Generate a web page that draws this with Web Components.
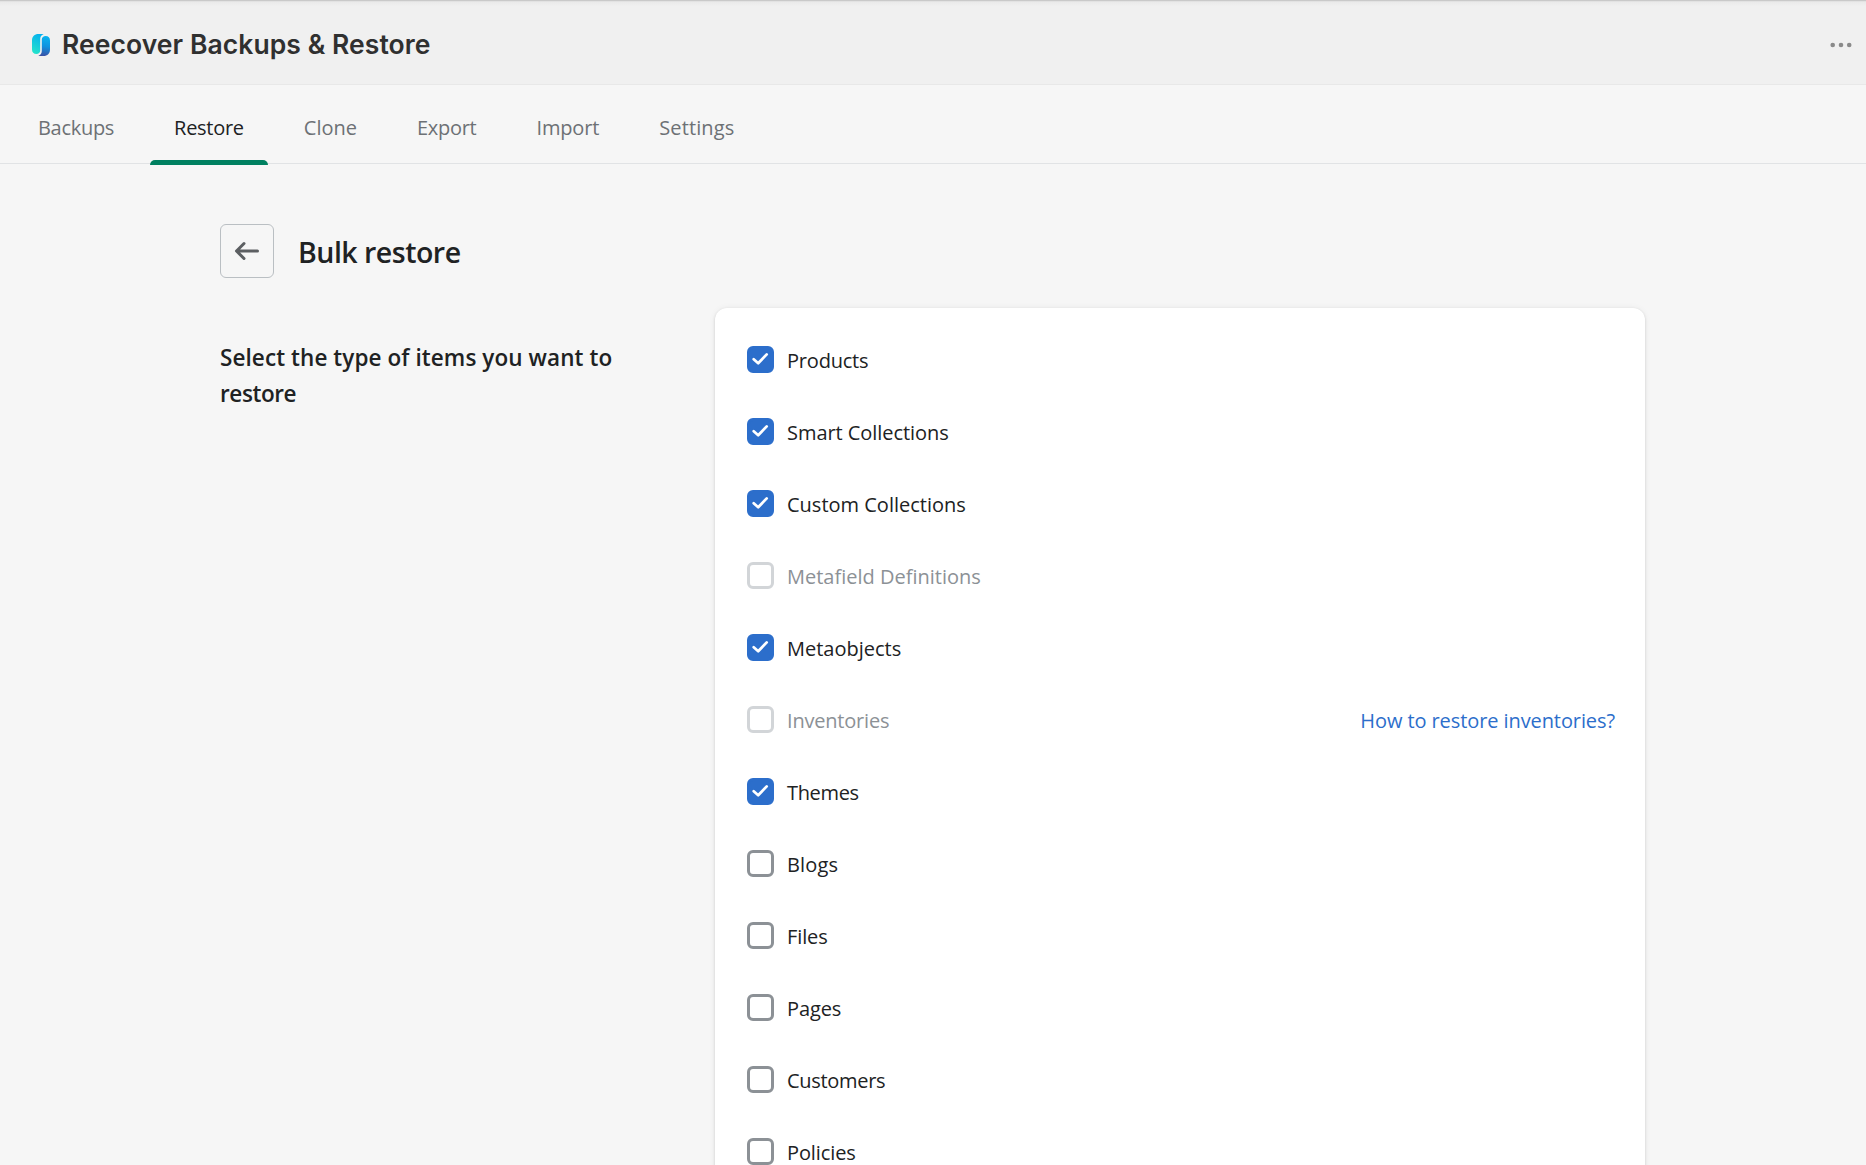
<!DOCTYPE html>
<html lang="en">
<head>
<meta charset="utf-8">
<title>Reecover Backups &amp; Restore</title>
<style>
    body {
        margin: 0;
        height: 1165px;
        overflow: hidden;
        background: #f6f6f6;
        color: #202223;
        font: 400 20px/28px "Open Sans", "Noto Sans", sans-serif;
    }
</style>
</head>
<body>
<restore-app></restore-app>

<script>
class AppHeader extends HTMLElement {
    constructor() {
        super();
        this.attachShadow({ mode: "open" });

        this.shadowRoot.innerHTML = `
            <style>
                :host {
                    display: flex;
                    align-items: center;
                    box-sizing: border-box;
                    height: 85px;
                    padding: 5px 14px 0 32px;
                    background: linear-gradient(#c9c9c9 0 1px, #e2e2e2 1px 2px, #eaeaea 2px, #f0f0f0 6px);
                    border-bottom: 1px solid #e8e8e8;
                }
                .logo {
                    flex: none;
                    margin-right: 12px;
                }
                .title {
                    flex: 1;
                    padding-bottom: 2px;
                    color: #303030;
                    font: 600 26.5px/36px Inter, sans-serif;
                    letter-spacing: 0.07px;
                }
            </style>
            <svg class="logo" width="18" height="22" viewBox="0 0 18 22">
                <defs>
                    <linearGradient id="left" x1="0.6" y1="0" x2="0.3" y2="1">
                        <stop offset="0" stop-color="#06b2ee"/>
                        <stop offset="1" stop-color="#25e3cb"/>
                    </linearGradient>
                    <linearGradient id="right" x1="0.5" y1="0" x2="0.4" y2="1">
                        <stop offset="0" stop-color="#08b4f0"/>
                        <stop offset="0.5" stop-color="#0c93e0"/>
                        <stop offset="1" stop-color="#3b50a4"/>
                    </linearGradient>
                </defs>
                <path fill="url(#left)" d="M6.5 0h5.2C9.3 1 8.2 2.800 8.200 5v11.500C8.200 18.800 6.600 20 4.600 20 1.700 20 0 18.300 0 15.500V6.500C0 2.500 2.500 0 6.500 0z"/>
                <path fill="url(#right)" d="M13.600 2C16.400 2 18 3.700 18 6.500v9c0 4-2.500 6.500-6.500 6.500H6.300c2.400-1 3.500-2.800 3.500-5V5.500C9.800 3.200 11.600 2 13.600 2z"/>
            </svg>
            <div class="title"><slot></slot></div>
            <svg width="22" height="6" viewBox="0 0 22 6" fill="#8a8a8a">
                <circle cx="2.700" cy="3" r="2.300"/>
                <circle cx="11" cy="3" r="2.300"/>
                <circle cx="19.200" cy="3" r="2.300"/>
            </svg>
        `;
    }
}

class NavTab extends HTMLElement {
    constructor() {
        super();
        this.attachShadow({ mode: "open" });

        this.shadowRoot.innerHTML = `
            <style>
                :host {
                    display: flex;
                    flex-direction: column;
                    justify-content: space-between;
                    color: #6d7175;
                }
                .label {
                    padding: 29px 24px 0;
                    white-space: nowrap;
                }
                .bar {
                    height: 5px;
                    border-radius: 5px 5px 0 0;
                }
                :host([selected]) {
                    color: #202223;
                }
                :host([selected]) .bar {
                    background: #008060;
                }
            </style>
            <div class="label"><slot></slot></div>
            <div class="bar"></div>
        `;
    }

    connectedCallback() {
        this.style.letterSpacing = (this.getAttribute("tracking") || 0) + "px";
    }
}

class NavTabs extends HTMLElement {
    constructor() {
        super();
        this.attachShadow({ mode: "open" });

        this.shadowRoot.innerHTML = `
            <style>
                :host {
                    display: flex;
                    gap: 12px;
                    height: 80px;
                    padding-left: 14px;
                    background: linear-gradient(#e1e3e5, #e1e3e5) 0 78px / 100% 1px no-repeat;
                }
            </style>
            <slot></slot>
        `;
    }
}

class BackButton extends HTMLElement {
    constructor() {
        super();
        this.attachShadow({ mode: "open" });

        this.shadowRoot.innerHTML = `
            <style>
                :host {
                    display: grid;
                    place-items: center;
                    box-sizing: border-box;
                    width: 54px;
                    height: 54px;
                    border: 1px solid #babfc3;
                    border-radius: 6px;
                }
            </style>
            <svg width="30" height="30" viewBox="0 0 20 20" fill="#5c5f62">
                <path d="M17 9H5.414l3.293-3.293a.999.999 0 1 0-1.414-1.414l-5 5a.999.999 0 0 0 0 1.414l5 5a.997.997 0 0 0 1.414 0 .999.999 0 0 0 0-1.414L5.414 11H17a1 1 0 1 0 0-2z"/>
            </svg>
        `;
    }
}

class CheckItem extends HTMLElement {
    constructor() {
        super();
        this.attachShadow({ mode: "open" });

        this.shadowRoot.innerHTML = `
            <style>
                :host {
                    display: flex;
                    box-sizing: border-box;
                    height: 72px;
                    padding-top: 22px;
                    line-height: 30px;
                }
                .box {
                    display: grid;
                    place-items: center;
                    flex: none;
                    box-sizing: border-box;
                    width: 27px;
                    height: 27px;
                    margin-right: 13px;
                    border: 3px solid #8c9196;
                    border-radius: 6px;
                }
                .box svg {
                    display: none;
                }
                .label {
                    flex: 1;
                    white-space: nowrap;
                }
                :host([checked]) .box {
                    border-color: #2c6ecb;
                    background: #2c6ecb;
                }
                :host([checked]) svg {
                    display: block;
                }
                :host([disabled]) .box {
                    border-color: #d2d5d8;
                }
                :host([disabled]) .label {
                    color: #8c9196;
                }
            </style>
            <div class="box">
                <svg width="21" height="21" viewBox="0 0 21 21" fill="none" stroke="#fff" stroke-width="2.700" stroke-linecap="round" stroke-linejoin="round">
                    <path d="M3.700 10.200l4.500 4.100 8.500-8.900"/>
                </svg>
            </div>
            <div class="label"></div>
            <slot></slot>
        `;
    }

    connectedCallback() {
        const label = this.shadowRoot.querySelector(".label");
        label.textContent = this.getAttribute("label");
        label.style.letterSpacing = (this.getAttribute("tracking") || 0) + "px";
    }
}

class HelpLink extends HTMLElement {
    constructor() {
        super();
        this.attachShadow({ mode: "open" });

        this.shadowRoot.innerHTML = `
            <style>
                :host {
                    display: block;
                    color: #2c6ecb;
                    letter-spacing: -0.09px;
                    white-space: nowrap;
                }
            </style>
            <slot></slot>
        `;
    }
}

class ItemCard extends HTMLElement {
    constructor() {
        super();
        this.attachShadow({ mode: "open" });

        this.shadowRoot.innerHTML = `
            <style>
                :host {
                    display: block;
                    box-sizing: border-box;
                    width: 930px;
                    padding: 16px 30px 16px 32px;
                    border-radius: 12px;
                    background: #fff;
                    box-shadow: 0 0 7px rgba(23, 24, 24, 0.05), 0 1px 3px rgba(0, 0, 0, 0.15);
                }
            </style>
            <slot></slot>
        `;
    }
}

class RestoreApp extends HTMLElement {
    constructor() {
        super();
        this.attachShadow({ mode: "open" });

        this.shadowRoot.innerHTML = `
            <style>
                :host {
                    display: block;
                }
                main {
                    padding: 59px 220px 0;
                }
                .heading {
                    display: flex;
                    align-items: center;
                    gap: 24px;
                }
                h1 {
                    margin: 0;
                    padding-top: 2px;
                    font-size: 28.5px;
                    font-weight: 600;
                    line-height: 40px;
                    letter-spacing: -0.5px;
                }
                .columns {
                    display: flex;
                    justify-content: space-between;
                    padding-top: 30px;
                    margin-right: 1px;
                }
                h2 {
                    width: 420px;
                    margin: 0;
                    padding-top: 32px;
                    font-size: 22.5px;
                    font-weight: 600;
                    line-height: 36px;
                    letter-spacing: 0.08px;
                }
                h2 span {
                    letter-spacing: -0.4px;
                }
            </style>
            <app-header>Reecover Backups &amp; Restore</app-header>
            <nav-tabs>
                <nav-tab tracking="-0.3">Backups</nav-tab>
                <nav-tab tracking="-0.28" selected>Restore</nav-tab>
                <nav-tab>Clone</nav-tab>
                <nav-tab tracking="-0.28">Export</nav-tab>
                <nav-tab tracking="-0.15">Import</nav-tab>
                <nav-tab tracking="0.12">Settings</nav-tab>
            </nav-tabs>
            <main>
                <div class="heading">
                    <back-button></back-button>
                    <h1>Bulk restore</h1>
                </div>
                <div class="columns">
                    <h2>Select the type of items you want to <span>restore</span></h2>
                    <item-card>
                        <check-item label="Products" tracking="-0.2" checked></check-item>
                        <check-item label="Smart Collections" tracking="-0.05" checked></check-item>
                        <check-item label="Custom Collections" checked></check-item>
                        <check-item label="Metafield Definitions" disabled></check-item>
                        <check-item label="Metaobjects" checked></check-item>
                        <check-item label="Inventories" tracking="-0.2" disabled>
                            <help-link>How to restore inventories?</help-link>
                        </check-item>
                        <check-item label="Themes" tracking="-0.35" checked></check-item>
                        <check-item label="Blogs" tracking="0.15"></check-item>
                        <check-item label="Files" tracking="-0.1"></check-item>
                        <check-item label="Pages" tracking="-0.1"></check-item>
                        <check-item label="Customers" tracking="-0.31"></check-item>
                        <check-item label="Policies" tracking="-0.1"></check-item>
                    </item-card>
                </div>
            </main>
        `;
    }
}

// Define the Web Components
customElements.define("app-header", AppHeader);
customElements.define("nav-tab", NavTab);
customElements.define("nav-tabs", NavTabs);
customElements.define("back-button", BackButton);
customElements.define("check-item", CheckItem);
customElements.define("help-link", HelpLink);
customElements.define("item-card", ItemCard);
customElements.define("restore-app", RestoreApp);
</script>
</body>
</html>
